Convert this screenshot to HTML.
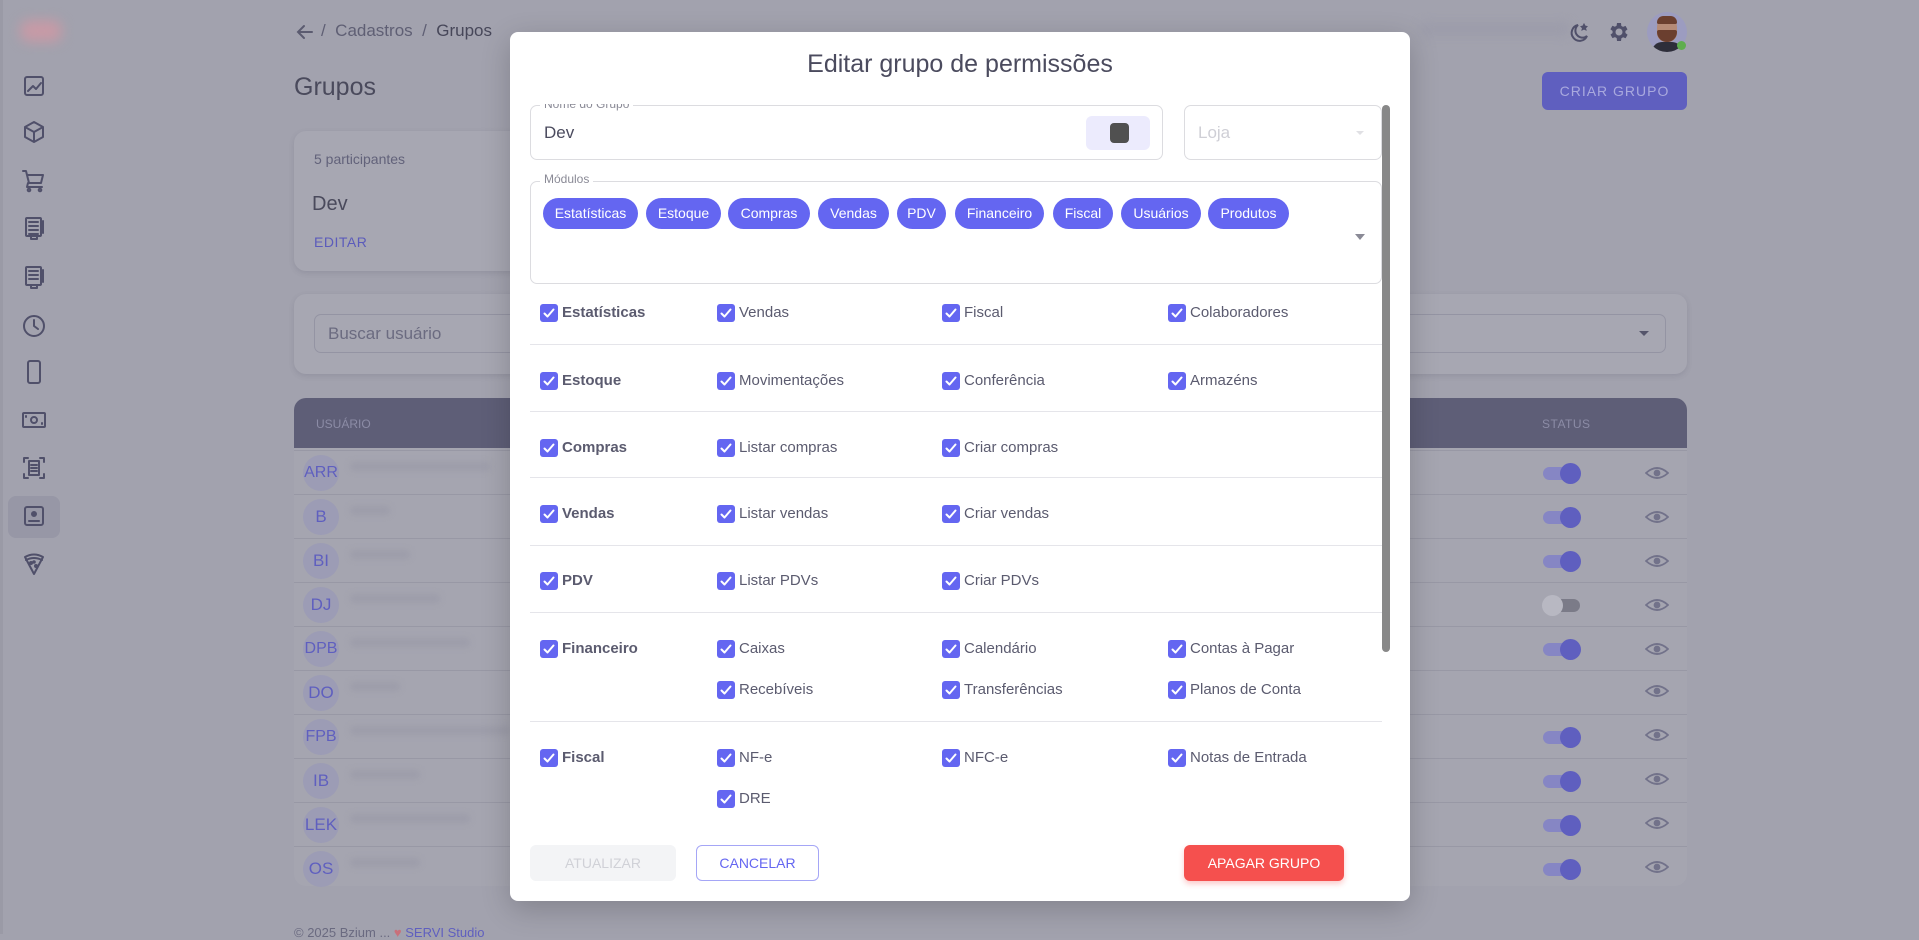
<!DOCTYPE html>
<html><head><meta charset="utf-8"><style>
*{box-sizing:border-box;margin:0;padding:0}
body{width:1919px;height:934px;overflow:hidden;background:#a2a2ae;font-family:"Liberation Sans",sans-serif;position:relative}
.a{position:absolute}
.card{position:absolute;background:#a7a7b2;border-radius:12px;box-shadow:0 2px 6px rgba(60,60,80,.15)}
.row{position:absolute;left:294px;width:1393px;height:44px;border-top:1px solid #9898a5}
.av{position:absolute;left:303px;width:36px;height:36px;border-radius:50%;background:#9c9cb5;color:#5f5fbf;font-size:17px;text-align:center;line-height:36px}
.tg{position:absolute;left:1543px;width:37px;height:13px;border-radius:7px;background:#8686c4}
.tg i{position:absolute;right:-1px;top:-4px;width:21px;height:21px;border-radius:50%;background:#5f5fbf}
.blur{position:absolute;left:350px;height:9px;border-radius:4px;background:#9d9daa;filter:blur(3px)}
.modal{position:absolute;left:510px;top:32px;width:900px;height:869px;background:#fff;border-radius:8px;box-shadow:0 8px 30px rgba(0,0,0,.2)}
.cb{position:absolute;width:18px;height:18px;border-radius:3px;background:#6466f1}
.cb svg{position:absolute;left:2px;top:2px}
.lb{position:absolute;font-size:15px;color:#5b5b6f;line-height:18px;white-space:nowrap}
.lb.b{font-weight:bold}
.sep{position:absolute;left:20px;width:852px;height:1px;background:#e5e5ea}
.chip{position:absolute;top:166px;height:31px;border-radius:16px;background:#6466f1;color:#fff;font-size:14px;line-height:31px;text-align:center}
</style></head><body>
<div class="a" style="left:0;top:0;width:3px;height:934px;background:#9a9aa6"></div>
<div class="a" style="left:20px;top:20px;width:42px;height:22px;border-radius:10px;background:#c79aa6;filter:blur(6px)"></div>
<div class="a" style="left:8px;top:496px;width:52px;height:42px;border-radius:8px;background:#9797a6"></div>
<svg class="a" style="left:0;top:0" width="70" height="600" fill="none" stroke="#50506a" stroke-width="2" stroke-linejoin="round" stroke-linecap="round">
<rect x="25" y="77" width="18" height="18" rx="2"/><path d="M28 91l5-5 3 3 5-6"/>
<path d="M34 122l9 5v10l-9 5-9-5v-10z M25 127l9 5 9-5 M34 132v10"/>
<path d="M23 171h3l3 12h12l2-8H28 M28 183l-1 4h15"/><circle cx="29" cy="190" r="1.3"/><circle cx="40" cy="190" r="1.3"/>
<rect x="26" y="218" width="15" height="18" rx="1"/><path d="M29 222h9M29 226h9M29 230h9M29 234h9M43 221v12M31 236v3h6v-3"/>
<rect x="26" y="267" width="15" height="18" rx="1"/><path d="M29 271h9M29 275h9M29 279h9M43 270v12M31 285v3h6v-3"/>
<circle cx="34" cy="326" r="10"/><path d="M34 320v6l4 3"/>
<rect x="28" y="361" width="12" height="22" rx="2"/>
<rect x="23" y="413" width="22" height="14" rx="1"/><circle cx="34" cy="420" r="3"/><path d="M26 416v1M42 423v1"/>
<path d="M24 462v-4h4M40 458h4v4M44 474v4h-4M28 478h-4v-4"/><rect x="29" y="461" width="10" height="14"/><path d="M31 465h6M31 468h6M31 471h6"/>
<rect x="25" y="507" width="18" height="18" rx="2"/><circle cx="34" cy="514" r="2" fill="#50506a"/><path d="M29 521h10"/>
<path d="M25 557q9-5 18 0l-9 17z M26 560q8-4 16 0"/><circle cx="31" cy="563" r="1" fill="#50506a"/><circle cx="36" cy="566" r="1" fill="#50506a"/><circle cx="34" cy="562" r=".8" fill="#50506a"/>
</svg>
<svg class="a" style="left:294px;top:22px" width="22" height="20" fill="none" stroke="#5b5b70" stroke-width="2" stroke-linecap="round"><path d="M18 10H4M10 4L4 10l6 6"/></svg>
<div class="a" style="left:321px;top:21px;font-size:17px;color:#5f5f74">/&nbsp;&nbsp;Cadastros&nbsp;&nbsp;/&nbsp;&nbsp;<span style="color:#474759">Grupos</span></div>
<div class="a" style="left:294px;top:73px;font-size:25px;color:#4a4a5c">Grupos</div>
<div class="a" style="left:1420px;top:22px;width:150px;height:14px;border-radius:7px;background:#9c9caa;filter:blur(5px)"></div>
<svg class="a" style="left:1566px;top:20px" width="26" height="26" fill="none" stroke="#50506a" stroke-width="2"><path d="M12 5a8 8 0 1 0 9 11a7 7 0 0 1-9-11z"/><path d="M18 4l1 2 2 .5-1.5 1.5.5 2-2-1-2 1 .5-2L15 6.5 17 6z" fill="#50506a" stroke-width="1"/></svg>
<svg class="a" style="left:1606px;top:20px" width="24" height="24" viewBox="0 0 24 24"><path fill="#50506a" d="M19.4 13a7.5 7.5 0 0 0 0-2l2.1-1.6-2-3.5-2.5 1a7 7 0 0 0-1.7-1L15 3h-4l-.4 2.7a7 7 0 0 0-1.7 1l-2.5-1-2 3.5L6.6 11a7.5 7.5 0 0 0 0 2l-2.1 1.6 2 3.5 2.5-1a7 7 0 0 0 1.7 1L11 21h4l.4-2.7a7 7 0 0 0 1.7-1l2.5 1 2-3.5zM13 15.5a3.5 3.5 0 1 1 0-7 3.5 3.5 0 0 1 0 7z"/></svg>
<div class="a" style="left:1647px;top:12px;width:40px;height:40px;border-radius:50%;background:#9c9cc0;overflow:hidden">
<div class="a" style="left:10px;top:6px;width:20px;height:24px;border-radius:9px;background:#b58a76"></div>
<div class="a" style="left:10px;top:4px;width:20px;height:8px;border-radius:8px 8px 2px 2px;background:#6b3f2f"></div>
<div class="a" style="left:10px;top:18px;width:20px;height:12px;border-radius:2px 2px 10px 10px;background:#6b3f2f"></div>
<div class="a" style="left:5px;top:30px;width:30px;height:14px;border-radius:10px 10px 0 0;background:#2e2e3a"></div></div>
<div class="a" style="left:1677px;top:41px;width:9px;height:9px;border-radius:50%;background:#5fae4e"></div>
<div class="a" style="left:1542px;top:72px;width:145px;height:38px;border-radius:6px;background:#5f5fbf;color:#a9a9de;font-size:14px;letter-spacing:1px;text-align:center;line-height:38px">CRIAR GRUPO</div>
<div class="card" style="left:294px;top:131px;width:300px;height:140px">
<div class="a" style="left:20px;top:20px;font-size:14px;color:#62627a">5 participantes</div>
<div class="a" style="left:18px;top:62px;font-size:20px;color:#4a4a5c">Dev</div>
<div class="a" style="left:20px;top:103px;font-size:14px;color:#5b5bbb;letter-spacing:.5px">EDITAR</div></div>
<div class="card" style="left:294px;top:294px;width:1393px;height:80px">
<div class="a" style="left:20px;top:20px;width:1352px;height:39px;border:1px solid #9494a3;border-radius:7px"></div>
<div class="a" style="left:34px;top:30px;font-size:17px;color:#6b6b80">Buscar usuário</div>
<div class="a" style="left:1345px;top:37px;border:5px solid transparent;border-top:5px solid #55556b"></div></div>
<div class="a" style="left:294px;top:398px;width:1393px;height:488px;border-radius:12px;background:#a5a5b0;overflow:hidden">
<div class="a" style="left:0;top:0;width:1393px;height:50px;background:#5e5e77"></div>
<div class="a" style="left:22px;top:19px;font-size:12px;color:#8c8ca6">USUÁRIO</div>
<div class="a" style="left:1248px;top:19px;font-size:12px;color:#8c8ca6;letter-spacing:.5px">STATUS</div></div>
<div class="a" style="left:294px;top:925px;font-size:13px;color:#6a6a80">© 2025 Bzium ... <span style="color:#c9707a">♥</span> <span style="color:#5f5fbf">SERVI Studio</span></div>
<div class="row" style="top:450px"></div><div class="row" style="top:494px"></div><div class="row" style="top:538px"></div><div class="row" style="top:582px"></div><div class="row" style="top:626px"></div><div class="row" style="top:670px"></div><div class="row" style="top:714px"></div><div class="row" style="top:758px"></div><div class="row" style="top:802px"></div><div class="row" style="top:846px"></div>
<div class="av" style="top:455px;font-size:16px">ARR</div><div class="av" style="top:499px">B</div><div class="av" style="top:543px">BI</div><div class="av" style="top:587px">DJ</div><div class="av" style="top:631px;font-size:16px">DPB</div><div class="av" style="top:675px">DO</div><div class="av" style="top:719px;font-size:16px">FPB</div><div class="av" style="top:763px">IB</div><div class="av" style="top:807px">LEK</div><div class="av" style="top:851px">OS</div>
<div class="blur" style="top:462px;width:140px"></div><div class="blur" style="top:506px;width:40px"></div><div class="blur" style="top:550px;width:60px"></div><div class="blur" style="top:594px;width:90px"></div><div class="blur" style="top:638px;width:120px"></div><div class="blur" style="top:682px;width:50px"></div><div class="blur" style="top:726px;width:160px"></div><div class="blur" style="top:770px;width:70px"></div><div class="blur" style="top:814px;width:120px"></div><div class="blur" style="top:858px;width:70px"></div>
<div class="tg" style="top:467px"><i></i></div><div class="tg" style="top:511px"><i></i></div><div class="tg" style="top:555px"><i></i></div>
<div class="tg" style="top:599px;background:#7b7b88;width:30px;left:1550px"><i style="left:-8px;right:auto;background:#b8b8c2"></i></div>
<div class="tg" style="top:643px"><i></i></div><div class="tg" style="top:731px"><i></i></div><div class="tg" style="top:775px"><i></i></div><div class="tg" style="top:819px"><i></i></div><div class="tg" style="top:863px"><i></i></div>
<svg class="a" style="left:1645px;top:464px" width="24" height="420" fill="none" stroke="#72728a" stroke-width="1.8">
<g id="e"><path d="M1 9q11-10 22 0q-11 10-22 0z"/><circle cx="12" cy="9" r="2.5" fill="#72728a"/></g>
<use href="#e" y="44"/><use href="#e" y="88"/><use href="#e" y="132"/><use href="#e" y="176"/><use href="#e" y="218"/><use href="#e" y="262"/><use href="#e" y="306"/><use href="#e" y="350"/><use href="#e" y="394"/></svg>
<div class="modal">
<div class="a" style="left:0;top:18px;width:900px;text-align:center;font-size:25px;color:#4b4b5e">Editar grupo de permissões</div>
<div class="a" style="left:0;top:72px;width:900px;height:745px;overflow:hidden">
<div class="a" style="left:20px;top:1px;width:633px;height:55px;border:1px solid #dcdce0;border-radius:7px"></div>
<div class="a" style="left:30px;top:-7px;padding:0 4px;background:#fff;font-size:12px;color:#8a8a96">Nome do Grupo</div>
<div class="a" style="left:34px;top:19px;font-size:17px;color:#4b4b5e">Dev</div>
<div class="a" style="left:576px;top:12px;width:64px;height:34px;border-radius:6px;background:#ecebfd"></div>
<div class="a" style="left:600px;top:19px;width:19px;height:20px;border-radius:4px;background:#505050"></div>
<div class="a" style="left:674px;top:1px;width:198px;height:55px;border:1px solid #dcdce0;border-radius:7px"></div>
<div class="a" style="left:688px;top:19px;font-size:17px;color:#cfcfd6">Loja</div>
<div class="a" style="left:846px;top:27px;border:4px solid transparent;border-top:4px solid #e0e0e4"></div>
<div class="a" style="left:20px;top:77px;width:852px;height:103px;border:1px solid #dcdce0;border-radius:7px"></div>
<div class="a" style="left:30px;top:68px;padding:0 4px;background:#fff;font-size:12px;color:#8a8a96">Módulos</div>
<div class="a" style="left:845px;top:130px;border:5px solid transparent;border-top:6px solid #8a8a96"></div>
<div class="a" style="left:0;top:-72px">
<div class="chip" style="left:33px;width:95px">Estatísticas</div><div class="chip" style="left:136px;width:75px">Estoque</div><div class="chip" style="left:218px;width:82px">Compras</div><div class="chip" style="left:308px;width:71px">Vendas</div><div class="chip" style="left:387px;width:49px">PDV</div><div class="chip" style="left:445px;width:89px">Financeiro</div><div class="chip" style="left:543px;width:60px">Fiscal</div><div class="chip" style="left:611px;width:80px">Usuários</div><div class="chip" style="left:698px;width:81px">Produtos</div>
</div>
<div class="a" style="left:0;top:-104px" id="perm">
<div class="sep" style="top:344px"></div><div class="sep" style="top:411px"></div><div class="sep" style="top:477px"></div><div class="sep" style="top:545px"></div><div class="sep" style="top:612px"></div><div class="sep" style="top:721px"></div>
</div>
</div>
<div class="a" style="left:872px;top:73px;width:8px;height:547px;border-radius:4px;background:#888"></div>
<div class="a" style="left:20px;top:813px;width:146px;height:36px;border-radius:6px;background:#f3f4f6;color:#d0d1d7;font-size:14px;text-align:center;line-height:36px">ATUALIZAR</div>
<div class="a" style="left:186px;top:813px;width:123px;height:36px;border-radius:6px;border:1px solid #a5a6f6;color:#6466f1;font-size:14px;text-align:center;line-height:34px">CANCELAR</div>
<div class="a" style="left:674px;top:813px;width:160px;height:36px;border-radius:6px;background:#f5504e;color:#fff;font-size:14px;text-align:center;line-height:36px;box-shadow:0 3px 6px rgba(245,80,78,.3)">APAGAR GRUPO</div>
</div>
<script>
var P=document.getElementById('perm');
var cols=[30,207,432,658];
var rows=[[313,['Estatísticas','Vendas','Fiscal','Colaboradores']],[381,['Estoque','Movimentações','Conferência','Armazéns']],[448,['Compras','Listar compras','Criar compras']],[514,['Vendas','Listar vendas','Criar vendas']],[581,['PDV','Listar PDVs','Criar PDVs']],[649,['Financeiro','Caixas','Calendário','Contas à Pagar']],[690,[null,'Recebíveis','Transferências','Planos de Conta']],[758,['Fiscal','NF-e','NFC-e','Notas de Entrada']],[799,[null,'DRE']]];
var h='';
rows.forEach(function(r){var y=r[0]-9;r[1].forEach(function(t,i){if(t===null)return;var x=cols[i];
h+='<div class="cb" style="left:'+x+'px;top:'+y+'px"><svg width="14" height="14"><path d="M2.5 7.5l3 3 6-7" fill="none" stroke="#fff" stroke-width="2" stroke-linecap="round" stroke-linejoin="round"/></svg></div>';
h+='<div class="lb'+(i==0?' b':'')+'" style="left:'+(x+22)+'px;top:'+y+'px">'+t+'</div>';});});
P.insertAdjacentHTML('beforeend',h);
</script>
</body></html>
